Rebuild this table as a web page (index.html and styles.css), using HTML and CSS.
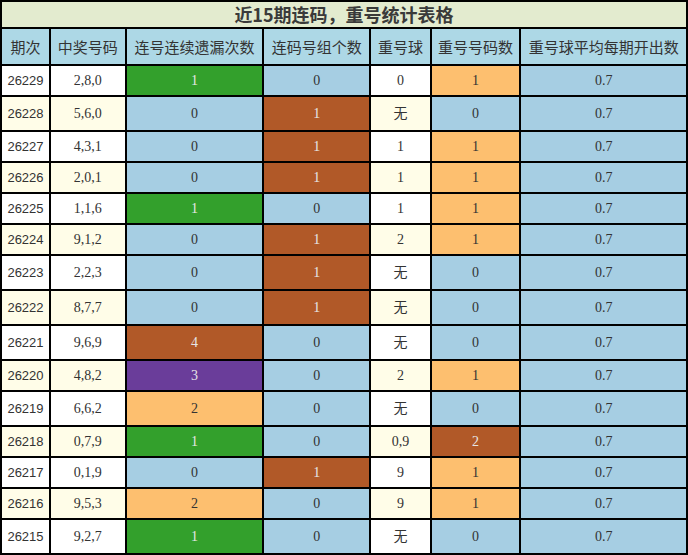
FILE: index.html
```html
<!DOCTYPE html>
<html lang="zh">
<head>
<meta charset="utf-8">
<title>近15期连码，重号统计表格</title>
<link rel="stylesheet" href="styles.css">
</head>
<body>
<table class="stats">
  <colgroup>
    <col class="c1"><col class="c2"><col class="c3"><col class="c4"><col class="c5"><col class="c6"><col class="c7">
  </colgroup>
  <thead>
    <tr class="title-row"><th colspan="7">近15期连码，重号统计表格</th></tr>
    <tr class="head-row">
      <th>期次</th><th>中奖号码</th><th>连号连续遗漏次数</th><th>连码号组个数</th><th>重号球</th><th>重号号码数</th><th>重号球平均每期开出数</th>
    </tr>
  </thead>
  <tbody>
    <tr class="odd"><td class="no">26229</td><td class="num">2,8,0</td><td class="g">1</td><td class="l">0</td><td class="rep">0</td><td class="o">1</td><td class="l">0.7</td></tr>
    <tr class="even tall"><td class="no">26228</td><td class="num">5,6,0</td><td class="l">0</td><td class="b">1</td><td class="rep">无</td><td class="l">0</td><td class="l">0.7</td></tr>
    <tr class="odd"><td class="no">26227</td><td class="num">4,3,1</td><td class="l">0</td><td class="b">1</td><td class="rep">1</td><td class="o">1</td><td class="l">0.7</td></tr>
    <tr class="even"><td class="no">26226</td><td class="num">2,0,1</td><td class="l">0</td><td class="b">1</td><td class="rep">1</td><td class="o">1</td><td class="l">0.7</td></tr>
    <tr class="odd"><td class="no">26225</td><td class="num">1,1,6</td><td class="g">1</td><td class="l">0</td><td class="rep">1</td><td class="o">1</td><td class="l">0.7</td></tr>
    <tr class="even"><td class="no">26224</td><td class="num">9,1,2</td><td class="l">0</td><td class="b">1</td><td class="rep">2</td><td class="o">1</td><td class="l">0.7</td></tr>
    <tr class="odd tall"><td class="no">26223</td><td class="num">2,2,3</td><td class="l">0</td><td class="b">1</td><td class="rep">无</td><td class="l">0</td><td class="l">0.7</td></tr>
    <tr class="even tall"><td class="no">26222</td><td class="num">8,7,7</td><td class="l">0</td><td class="b">1</td><td class="rep">无</td><td class="l">0</td><td class="l">0.7</td></tr>
    <tr class="odd tall"><td class="no">26221</td><td class="num">9,6,9</td><td class="b">4</td><td class="l">0</td><td class="rep">无</td><td class="l">0</td><td class="l">0.7</td></tr>
    <tr class="even"><td class="no">26220</td><td class="num">4,8,2</td><td class="p">3</td><td class="l">0</td><td class="rep">2</td><td class="o">1</td><td class="l">0.7</td></tr>
    <tr class="odd tall"><td class="no">26219</td><td class="num">6,6,2</td><td class="o">2</td><td class="l">0</td><td class="rep">无</td><td class="l">0</td><td class="l">0.7</td></tr>
    <tr class="even"><td class="no">26218</td><td class="num">0,7,9</td><td class="g">1</td><td class="l">0</td><td class="rep">0,9</td><td class="b">2</td><td class="l">0.7</td></tr>
    <tr class="odd"><td class="no">26217</td><td class="num">0,1,9</td><td class="l">0</td><td class="b">1</td><td class="rep">9</td><td class="o">1</td><td class="l">0.7</td></tr>
    <tr class="even"><td class="no">26216</td><td class="num">9,5,3</td><td class="o">2</td><td class="l">0</td><td class="rep">9</td><td class="o">1</td><td class="l">0.7</td></tr>
    <tr class="odd tall"><td class="no">26215</td><td class="num">9,2,7</td><td class="g">1</td><td class="l">0</td><td class="rep">无</td><td class="l">0</td><td class="l">0.7</td></tr>
  </tbody>
</table>
</body>
</html>
```
FILE: styles.css
```css
html, body {
  margin: 0;
  padding: 0;
  background: #ffffff;
}

.stats {
  width: 688px;
  table-layout: fixed;
  border-collapse: separate;
  border-spacing: 0;
  border: 1px solid #000;
  font-family: "Liberation Serif", "Noto Sans CJK SC", serif;
  font-size: 14px;
  color: #333;
}

.c1 { width: 48px; }
.c2 { width: 74px; }
.c3 { width: 135px; }
.c4 { width: 105px; }
.c5 { width: 59px; }
.c6 { width: 88px; }
.c7 { width: 163px; }

.stats th,
.stats td {
  border: 1px solid #000;
  padding: 0;
  text-align: center;
  vertical-align: middle;
  line-height: 16px;
  overflow: hidden;
  white-space: nowrap;
}

.title-row th {
  height: 25px;
  background: #e3ebcf;
  font-family: "Noto Sans CJK SC", sans-serif;
  font-size: 18px;
  font-weight: bold;
  color: #3a3a3a;
  line-height: 25px;
}

.head-row th {
  height: 35px;
  background: #add8e6;
  font-family: "Noto Sans CJK SC", sans-serif;
  font-size: 15px;
  font-weight: normal;
  color: #333;
}

.stats tbody td {
  height: 29px;
}

.stats tbody tr.tall td {
  height: 33px;
}

.odd .no, .odd .num, .odd .rep { background: #ffffff; }
.even .no, .even .num, .even .rep { background: #fffde8; }

.no {
  font-family: "Liberation Sans", "DejaVu Sans", sans-serif;
  font-size: 13px;
}

.rep { font-size: 14px; }

.l { background: #a6cee3; color: #333; }
.o { background: #fdbf6f; color: #333; }
.g { background: #33a02c; color: #e6e6e6; }
.b { background: #b15928; color: #e6e6e6; }
.p { background: #6a3d9a; color: #e6e6e6; }
```
